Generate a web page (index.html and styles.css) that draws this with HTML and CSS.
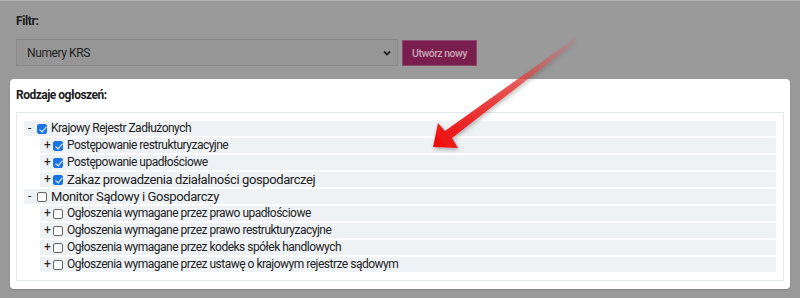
FILE: index.html
```html
<!DOCTYPE html>
<html lang="pl">
<head>
    <meta charset="UTF-8">
    <meta name="viewport" content="width=device-width, initial-scale=1.0">
    <title>Filtr ogłoszeń</title>
    <link rel="stylesheet" href="styles.css">
</head>
<body>
    <!-- Filter bar behind the dialog -->
    <div class="filter">
        <label class="filter-label" for="filterSelect">Filtr:</label>
        <div class="filter-row">
            <div class="select-box">
                <span>Numery KRS</span>
                <svg class="chevron" width="8" height="6" viewBox="0 0 8 6"><path d="M1 1.5 L4 4.5 L7 1.5" fill="none" stroke="#222" stroke-width="1.8"/></svg>
            </div>
            <button class="create-btn">Utwórz nowy</button>
        </div>
    </div>

    <!-- Dialog with announcement types -->
    <div class="panel">
        <h2 class="panel-title">Rodzaje ogłoszeń:</h2>
        <div class="tree">
            <div class="tree-row">
                <span class="toggle">-</span>
                <span class="check checked"></span>
                <span class="label">Krajowy Rejestr Zadłużonych</span>
            </div>
            <div class="tree-row child">
                <span class="toggle">+</span>
                <span class="check checked"></span>
                <span class="label">Postępowanie restrukturyzacyjne</span>
            </div>
            <div class="tree-row child">
                <span class="toggle">+</span>
                <span class="check checked"></span>
                <span class="label">Postępowanie upadłościowe</span>
            </div>
            <div class="tree-row child">
                <span class="toggle">+</span>
                <span class="check checked"></span>
                <span class="label large">Zakaz prowadzenia działalności gospodarczej</span>
            </div>
            <div class="tree-row">
                <span class="toggle">-</span>
                <span class="check"></span>
                <span class="label large">Monitor Sądowy i Gospodarczy</span>
            </div>
            <div class="tree-row child">
                <span class="toggle">+</span>
                <span class="check"></span>
                <span class="label">Ogłoszenia wymagane przez prawo upadłościowe</span>
            </div>
            <div class="tree-row child">
                <span class="toggle">+</span>
                <span class="check"></span>
                <span class="label">Ogłoszenia wymagane przez prawo restrukturyzacyjne</span>
            </div>
            <div class="tree-row child">
                <span class="toggle">+</span>
                <span class="check"></span>
                <span class="label">Ogłoszenia wymagane przez kodeks spółek handlowych</span>
            </div>
            <div class="tree-row child">
                <span class="toggle">+</span>
                <span class="check"></span>
                <span class="label">Ogłoszenia wymagane przez ustawę o krajowym rejestrze sądowym</span>
            </div>
        </div>
    </div>

    <!-- Red pointer arrow drawn over the page -->
    <svg class="arrow" width="800" height="298" viewBox="0 0 800 298">
        <defs>
            <linearGradient id="arrowFill" x1="576" y1="38" x2="440" y2="140" gradientUnits="userSpaceOnUse">
                <stop offset="0" stop-color="#e25a5a" stop-opacity="0.15"/>
                <stop offset="0.45" stop-color="#e53434" stop-opacity="0.8"/>
                <stop offset="1" stop-color="#ee1111"/>
            </linearGradient>
            <filter id="arrowShadow" x="-20%" y="-20%" width="140%" height="140%">
                <feDropShadow dx="1" dy="2" stdDeviation="2" flood-color="#000" flood-opacity="0.3"/>
            </filter>
        </defs>
        <path d="M575 37 L577 40 L452 137 L458 147 L433 146 L438 122 L445 130 Z" fill="url(#arrowFill)" filter="url(#arrowShadow)"/>
    </svg>
</body>
</html>
```

FILE: styles.css
```css
body {
    margin: 0;
    height: 298px;
    overflow: hidden;
    background-color: #9a9a9a;
    border-top: 1px solid #b4b4b4;
    box-sizing: border-box;
    font-family: Roboto, "Liberation Sans", Arial, sans-serif;
    font-size: 12px;
    color: #222;
    position: relative;
}

.filter {
    padding: 13px 16px 0;
}

.filter-label {
    display: block;
    font-weight: bold;
    line-height: 15px;
    letter-spacing: -0.4px;
    color: #1c1c1c;
}

.filter-row {
    display: flex;
    margin-top: 10px;
    gap: 4px;
}

.select-box {
    width: 382px;
    height: 27px;
    box-sizing: border-box;
    border: 1px solid #8a8a8a;
    background-color: #969696;
    display: flex;
    align-items: center;
    justify-content: space-between;
    padding: 0 6px 0 10px;
    letter-spacing: -0.4px;
    color: #1e1e1e;
}

.chevron {
    display: block;
}

.create-btn {
    width: 75px;
    height: 26px;
    margin-top: 1px;
    border: 1px solid #8b4a6b;
    background-color: #7a1f4d;
    color: #c9a3b6;
    font-family: inherit;
    font-size: 10.5px;
    font-weight: 500;
    letter-spacing: -0.5px;
    white-space: nowrap;
    padding: 0;
}

.panel {
    margin: 13px 10px 0;
    height: 210px;
    box-sizing: border-box;
    background-color: #fff;
    border-radius: 4px;
    padding: 9px 6px 0;
    box-shadow: 0 1px 2px rgba(0, 0, 0, 0.15);
}

.panel-title {
    margin: 0 0 9px;
    font-size: 12px;
    line-height: 15px;
    font-weight: bold;
    letter-spacing: -0.5px;
    color: #1c1c1c;
}

.tree {
    border: 1px solid #e3e8ee;
    padding: 8px 7px;
    display: flex;
    flex-direction: column;
    gap: 2px;
}

.tree-row {
    height: 15px;
    display: flex;
    align-items: center;
    background-color: #eef2f5;
}

.tree-row.child {
    margin-left: 16px;
}

.toggle {
    width: 9px;
    padding-left: 4px;
    line-height: 15px;
}

.check {
    width: 10px;
    height: 10px;
    box-sizing: border-box;
    border: 1px solid #666;
    border-radius: 2px;
    background-color: #fff;
    margin-right: 4px;
    position: relative;
}

.check.checked {
    background-color: #1a74e8;
    border-color: #1a74e8;
}

.check.checked::after {
    content: "";
    position: absolute;
    left: 2.5px;
    top: 0px;
    width: 3px;
    height: 6px;
    border: solid #fff;
    border-width: 0 1.6px 1.6px 0;
    transform: rotate(40deg);
}

.label {
    line-height: 15px;
    letter-spacing: -0.5px;
    white-space: nowrap;
}

.label.large {
    font-size: 13px;
    letter-spacing: -0.4px;
}

.arrow {
    position: absolute;
    left: 0;
    top: 0;
    pointer-events: none;
}
```
